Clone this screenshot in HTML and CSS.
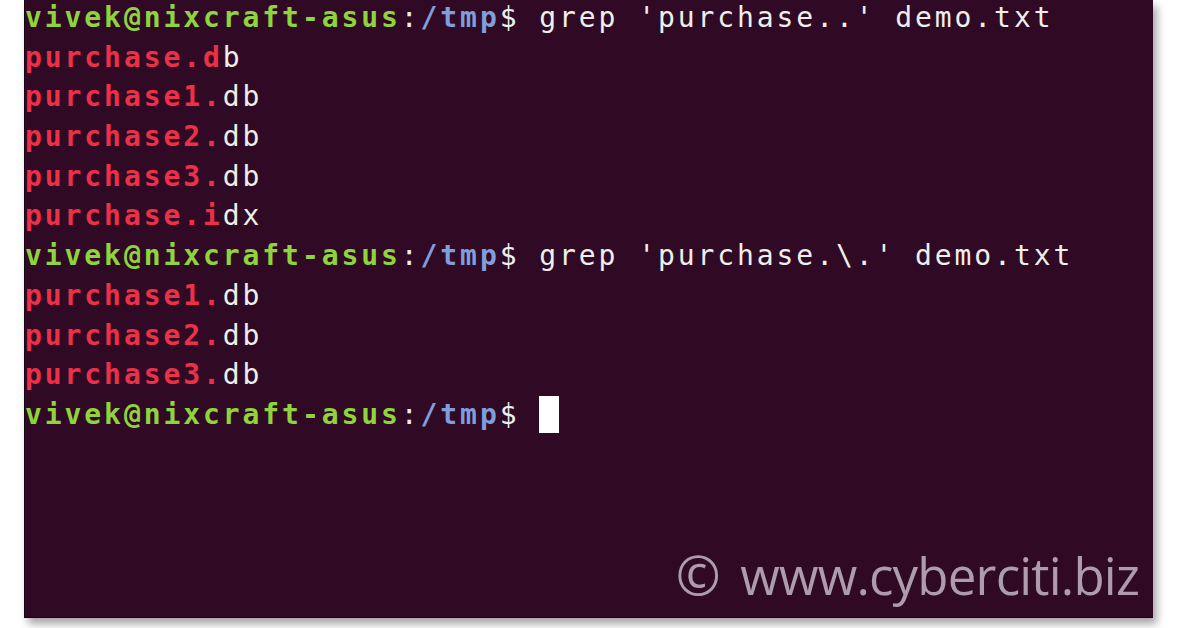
FILE: index.html
```html
<!DOCTYPE html>
<html>
<head>
<meta charset="utf-8">
<link rel="stylesheet" href="styles.css">
</head>
<body>
<div class="page">
  <div class="terminal">
    <div class="lines">
      <div class="line"><span class="user">vivek@nixcraft-asus</span>:<span class="path">/tmp</span>$ grep 'purchase..' demo.txt</div>
      <div class="line"><span class="match">purchase.d</span>b</div>
      <div class="line"><span class="match">purchase1.</span>db</div>
      <div class="line"><span class="match">purchase2.</span>db</div>
      <div class="line"><span class="match">purchase3.</span>db</div>
      <div class="line"><span class="match">purchase.i</span>dx</div>
      <div class="line"><span class="user">vivek@nixcraft-asus</span>:<span class="path">/tmp</span>$ grep 'purchase.\.' demo.txt</div>
      <div class="line"><span class="match">purchase1.</span>db</div>
      <div class="line"><span class="match">purchase2.</span>db</div>
      <div class="line"><span class="match">purchase3.</span>db</div>
      <div class="line"><span class="user">vivek@nixcraft-asus</span>:<span class="path">/tmp</span>$ <span class="cursor"></span></div>
    </div>
    <div class="watermark"><span class="copy">©</span> www.cyberciti.biz</div>
  </div>
</div>
</body>
</html>
```

FILE: styles.css
```css
html, body {
  margin: 0;
  padding: 0;
  background: #ffffff;
}
.page {
  width: 1196px;
  height: 628px;
  overflow: hidden;
  padding-left: 24px;
  box-sizing: border-box;
}
.terminal {
  width: 1129px;
  height: 618px;
  background: #300a24;
  border-left: 1px solid #1a0414;
  border-bottom: 1px solid #1a0414;
  box-sizing: border-box;
  box-shadow: 4px 6px 8px rgba(0, 0, 0, 0.35);
  display: flex;
  flex-direction: column;
  overflow: hidden;
}
.lines {
  margin-top: -2px;
  font-family: "DejaVu Sans Mono", monospace;
  font-size: 28px;
  letter-spacing: 2.92px;
  line-height: 39.7px;
  color: #eeeeec;
}
.line {
  height: 39.7px;
  white-space: pre;
}
.user {
  color: #8fd43c;
  font-weight: bold;
}
.path {
  color: #7f9fdc;
  font-weight: bold;
}
.match {
  color: #ec3048;
  font-weight: bold;
}
.cursor {
  display: inline-block;
  width: 20px;
  height: 37px;
  background: #ffffff;
  vertical-align: top;
  margin-top: 1px;
}
.watermark {
  margin-top: auto;
  align-self: flex-end;
  margin-right: 14px;
  margin-bottom: 14px;
  font-family: "Open Sans", sans-serif;
  font-size: 51px;
  color: #ad9cad;
  letter-spacing: -0.8px;
  line-height: 56px;
  white-space: nowrap;
}
.copy {
  font-size: 54px;
  margin-right: 8px;
}
```
